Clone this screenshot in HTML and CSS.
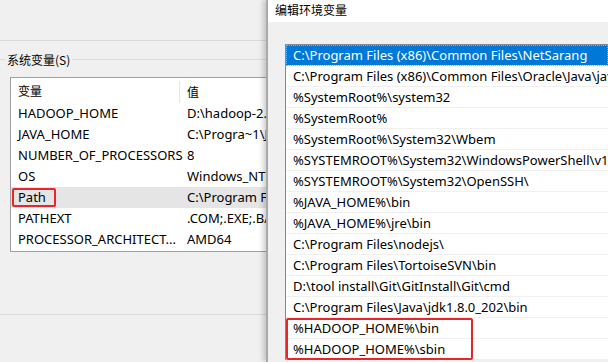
FILE: index.html
```html
<!DOCTYPE html>
<html lang="zh-CN">
<head>
  <meta charset="UTF-8">
  <title>编辑环境变量</title>
  <link rel="stylesheet" href="styles.css">
</head>
<body>
  <div class="screen">
    <div class="sysprops">
      <div class="top-area"></div>
      <div class="group-title">
        <span class="group-line short"></span>
        <span class="group-label">系统变量(S)</span>
        <span class="group-line"></span>
      </div>
      <div class="varlist">
        <div class="varhead">
          <div class="col-name">变量</div>
          <div class="col-value sep">值</div>
        </div>
        <div class="varrow"><div class="col-name">HADOOP_HOME</div><div class="col-value">D:\hadoop-2.5</div></div>
        <div class="varrow"><div class="col-name">JAVA_HOME</div><div class="col-value">C:\Progra~1\J</div></div>
        <div class="varrow"><div class="col-name">NUMBER_OF_PROCESSORS</div><div class="col-value">8</div></div>
        <div class="varrow"><div class="col-name">OS</div><div class="col-value">Windows_NT</div></div>
        <div class="varrow hover"><div class="col-name"><span class="mark">Path</span></div><div class="col-value">C:\Program Fi</div></div>
        <div class="varrow"><div class="col-name">PATHEXT</div><div class="col-value">.COM;.EXE;.BA</div></div>
        <div class="varrow"><div class="col-name">PROCESSOR_ARCHITECT...</div><div class="col-value">AMD64</div></div>
      </div>
      <div class="bottom-line"></div>
    </div>

    <div class="dialog">
      <div class="titlebar">编辑环境变量</div>
      <div class="dialog-body">
        <div class="pathlist">
          <div class="pathrow selected">C:\Program Files (x86)\Common Files\NetSarang</div>
          <div class="pathrow">C:\Program Files (x86)\Common Files\Oracle\Java\java</div>
          <div class="pathrow">%SystemRoot%\system32</div>
          <div class="pathrow">%SystemRoot%</div>
          <div class="pathrow">%SystemRoot%\System32\Wbem</div>
          <div class="pathrow">%SYSTEMROOT%\System32\WindowsPowerShell\v1.0\</div>
          <div class="pathrow">%SYSTEMROOT%\System32\OpenSSH\</div>
          <div class="pathrow">%JAVA_HOME%\bin</div>
          <div class="pathrow">%JAVA_HOME%\jre\bin</div>
          <div class="pathrow">C:\Program Files\nodejs\</div>
          <div class="pathrow">C:\Program Files\TortoiseSVN\bin</div>
          <div class="pathrow">D:\tool install\Git\GitInstall\Git\cmd</div>
          <div class="pathrow">C:\Program Files\Java\jdk1.8.0_202\bin</div>
          <div class="marked">
            <div class="pathrow">%HADOOP_HOME%\bin</div>
            <div class="pathrow">%HADOOP_HOME%\sbin</div>
          </div>
        </div>
      </div>
    </div>
  </div>
</body>
</html>
```

FILE: styles.css
```css
html, body {
  margin: 0;
  padding: 0;
}
body {
  width: 608px;
  height: 362px;
  overflow: hidden;
  background: #f0f0f0;
  font-family: "Noto Sans", "Noto Sans CJK SC", sans-serif;
  color: #000;
}
.screen {
  display: flex;
  height: 362px;
}

/* left window: system properties */
.sysprops {
  width: 266px;
  flex: none;
  overflow: hidden;
  background: #f0f0f0;
}
.top-area {
  height: 40px;
  border-bottom: 1px solid #dadada;
}
.group-title {
  display: flex;
  align-items: center;
  height: 36px;
  font-size: 12px;
  font-family: "Noto Sans CJK SC", sans-serif;
}
.group-line {
  flex: 1;
  height: 1px;
  background: #dcdcdc;
}
.group-line.short {
  flex: none;
  width: 5px;
}
.group-label {
  padding: 0 2px;
}
.varlist {
  margin-left: 10px;
  width: 300px;
  height: 173px;
  overflow: hidden;
  background: #fff;
  border: 1px solid #a0a0a0;
  font-size: 13px;
}
.varhead {
  display: flex;
  height: 25px;
  align-items: center;
  font-family: "Noto Sans CJK SC", sans-serif;
  font-size: 12px;
}
.varhead .sep {
  border-left: 1px solid #e5e5e5;
  height: 22px;
  line-height: 22px;
  margin-top: 2px;
}
.varrow {
  display: flex;
  height: 21px;
  line-height: 21px;
}
.varrow.hover {
  background: #e5e5e5;
}
.col-name {
  flex: none;
  width: 161px;
  padding-left: 7px;
  white-space: nowrap;
}
.col-value {
  flex: 1;
  padding-left: 7px;
  white-space: nowrap;
}
.varrow .col-value {
  padding-left: 8px;
}
.mark {
  display: inline-block;
  margin-left: -6px;
  padding: 0 8px 0 4px;
  height: 15px;
  line-height: 15px;
  border: 2px solid #e8252a;
  border-radius: 2px;
}
.bottom-line {
  margin-top: 62px;
  height: 1px;
  background: #dadada;
}

/* right window: edit environment variable dialog */
.dialog {
  flex: 1;
  min-width: 0;
  position: relative;
  border-left: 2px solid #a9a9a9;
  box-shadow: -3px 0 5px rgba(0, 0, 0, 0.18);
  background: #f0f0f0;
}
.titlebar {
  height: 22px;
  line-height: 20px;
  padding-left: 7px;
  background: #fff;
  font-family: "Noto Sans CJK SC", sans-serif;
  font-size: 12px;
}
.dialog-body {
  padding: 22px 0 0 17px;
}
.pathlist {
  background: #fff;
  border-top: 1px solid #828790;
  border-left: 1px solid #828790;
  font-size: 13px;
  white-space: nowrap;
  overflow: hidden;
}
.pathrow {
  height: 20px;
  line-height: 20px;
  padding-left: 7px;
  border-bottom: 1px solid #f0f0f0;
}
.pathrow.selected {
  background: #0078d7;
  color: #fff;
  outline: 1px dotted #f0a050;
  outline-offset: -1px;
}
.marked {
  position: relative;
}
.marked::after {
  content: "";
  position: absolute;
  left: 0;
  top: 0;
  width: 183px;
  height: 38px;
  border: 2px solid #e8252a;
  border-radius: 2px;
}
```
